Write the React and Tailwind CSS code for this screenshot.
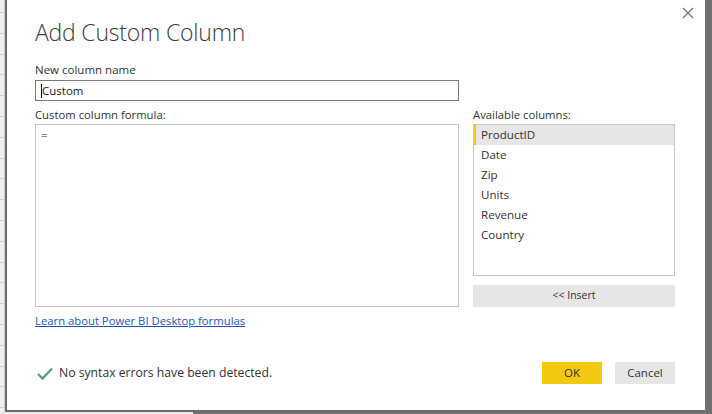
import React, { useState } from 'react';

const columns = ['ProductID', 'Date', 'Zip', 'Units', 'Revenue', 'Country'];
const gridRows = Array.from({ length: 20 });

const App = () => {
  const [name, setName] = useState('Custom');
  const [selected, setSelected] = useState('ProductID');

  return (
    <div className="w-[712px] h-[414px] overflow-hidden flex flex-col bg-[#f0f0f0] font-['Open_Sans',sans-serif] text-[#333]">
      <div className="flex h-[412px]">
        {/* spreadsheet behind the dialog */}
        <div className="w-[5px] flex flex-col pt-[12px] border-r border-[#d4d4d4]">
          {gridRows.map((_, i) => (
            <div key={i} className="h-[20.8px] shrink-0 border-t border-[#d0d0d0]" />
          ))}
        </div>

        <div className="w-[700px] bg-white border-l-2 border-b-2 border-[#6b6b6b] flex flex-col pl-[28px] pr-[28px] relative">
          <button className="absolute right-[8px] top-[4px] w-[18px] h-[18px] flex items-center justify-center text-[#707070]">
            <svg width="12" height="12" viewBox="0 0 12 12">
              <path d="M1 1 L11 11 M11 1 L1 11" stroke="currentColor" strokeWidth="1.1" />
            </svg>
          </button>

          <h1 className="mt-[16px] text-[23px] leading-[32px] font-light text-[#3c3c3c] tracking-[-0.2px]">Add Custom Column</h1>

          <label className="mt-[14px] text-[11.5px] leading-[16px] text-[#333]">New column name</label>
          <div className="mt-[2px] w-[424px] h-[21px] border border-[#7a7a7a] flex items-center px-[5px]">
            <span className="w-px h-[14px] bg-black" />
            <input
              value={name}
              onChange={(e) => setName(e.target.value)}
              className="text-[11.5px] leading-[16px] outline-none flex-1 bg-transparent text-[#222]"
            />
          </div>

          <div className="flex gap-[14px] mt-[6px]">
            <div className="w-[424px] flex flex-col">
              <label className="text-[11.3px] leading-[16px]">Custom column formula:</label>
              <div className="mt-[1px] h-[183px] border border-[#c6c6c6] px-[5px] pt-[2px] text-[11.5px] leading-[16px] text-[#222]">=</div>
            </div>

            <div className="w-[202px] flex flex-col">
              <label className="text-[11.3px] leading-[16px]">Available columns:</label>
              <div className="mt-[1px] h-[152px] border border-[#c6c6c6] flex flex-col">
                {columns.map((c) => (
                  <div
                    key={c}
                    onClick={() => setSelected(c)}
                    className={`h-[20px] flex items-center pl-[5px] text-[11.6px] border-l-2 ${
                      selected === c ? 'bg-[#e6e6e6] border-[#f2c811]' : 'border-transparent'
                    }`}
                  >
                    {c}
                  </div>
                ))}
              </div>
              <button className="mt-[9px] h-[22px] bg-[#e6e6e6] text-[10.5px] text-[#333]">&lt;&lt; Insert</button>
            </div>
          </div>

          <a href="#" className="mt-[6px] self-start text-[11.3px] leading-[16px] text-[#1d57b5] underline">
            Learn about Power BI Desktop formulas
          </a>

          <div className="flex items-center mt-[33px] pr-[2px]">
            <svg width="16" height="13" viewBox="0 0 16 13" className="ml-[2px]">
              <path d="M1 7 L5.5 11.5 L15 1.5" fill="none" stroke="#5d9f80" strokeWidth="2.4" />
            </svg>
            <span className="ml-[6px] text-[12.2px] text-[#333]">No syntax errors have been detected.</span>
            <div className="ml-auto flex gap-[13px]">
              <button className="w-[60px] h-[22px] bg-[#f2c811] text-[11.5px] text-[#333]">OK</button>
              <button className="w-[60px] h-[22px] bg-[#e6e6e6] text-[11.5px] text-[#333]">Cancel</button>
            </div>
          </div>
        </div>

        <div className="flex-1 bg-[#717171]" />
      </div>
      <div className="flex h-[2px]">
        <div className="w-[193px] bg-[#e8e8e8]" />
        <div className="flex-1 bg-[#717171]" />
      </div>
    </div>
  );
};

export default App;
